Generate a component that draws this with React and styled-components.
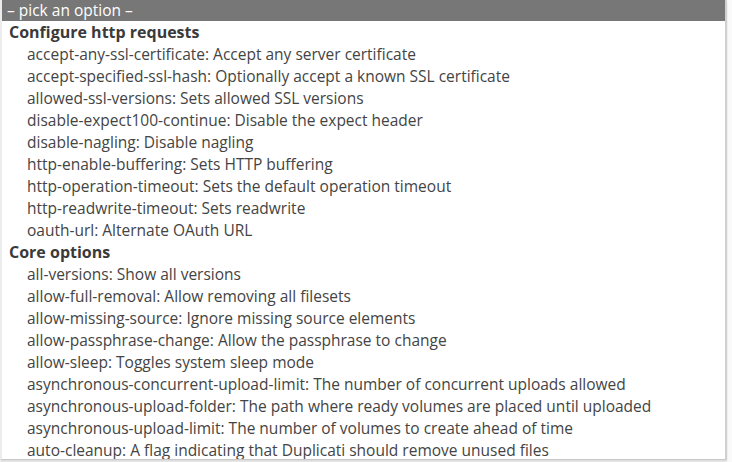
import React from "react";
import styled, { createGlobalStyle } from "styled-components";

const GlobalStyle = createGlobalStyle`
  html, body {
    margin: 0;
    padding: 0;
    background: #fafafa;
    overflow: hidden;
  }
`;

const groups = [
  {
    label: "Configure http requests",
    options: [
      "accept-any-ssl-certificate: Accept any server certificate",
      "accept-specified-ssl-hash: Optionally accept a known SSL certificate",
      "allowed-ssl-versions: Sets allowed SSL versions",
      "disable-expect100-continue: Disable the expect header",
      "disable-nagling: Disable nagling",
      "http-enable-buffering: Sets HTTP buffering",
      "http-operation-timeout: Sets the default operation timeout",
      "http-readwrite-timeout: Sets readwrite",
      "oauth-url: Alternate OAuth URL",
    ],
  },
  {
    label: "Core options",
    options: [
      "all-versions: Show all versions",
      "allow-full-removal: Allow removing all filesets",
      "allow-missing-source: Ignore missing source elements",
      "allow-passphrase-change: Allow the passphrase to change",
      "allow-sleep: Toggles system sleep mode",
      "asynchronous-concurrent-upload-limit: The number of concurrent uploads allowed",
      "asynchronous-upload-folder: The path where ready volumes are placed until uploaded",
      "asynchronous-upload-limit: The number of volumes to create ahead of time",
      "auto-cleanup: A flag indicating that Duplicati should remove unused files",
    ],
  },
];

const Page = styled.div`
  width: 732px;
  height: 462px;
  display: flex;
  font-family: "Open Sans", "Noto Sans", sans-serif;
`;

const ListBox = styled.div`
  width: 727px;
  height: 460px;
  background: #fff;
  border-right: 2px solid #d0d0d0;
  border-bottom: 1px solid #c8c8c8;
  border-left: 2px solid #ececec;
  box-shadow: 0 2px 2px rgba(0, 0, 0, 0.12);
  overflow: hidden;
  box-sizing: border-box;
`;

const Header = styled.div`
  height: 21px;
  margin-left: -2px;
  padding-left: 7px;
  background: #777;
  color: #fff;
  font-size: 15.5px;
  line-height: 20px;
`;

const GroupLabel = styled.div`
  height: 22px;
  line-height: 23px;
  padding-left: 7px;
  font-size: 16px;
  font-weight: 700;
  color: #3a3a3a;
`;

const Option = styled.div`
  height: 22px;
  line-height: 23px;
  padding-left: 25px;
  font-size: 15.5px;
  color: #444;
  white-space: nowrap;
`;

export default function App() {
  return (
    <>
      <GlobalStyle />
      <Page>
        <ListBox>
          <Header>– pick an option –</Header>
          {groups.map((g) => (
            <div key={g.label}>
              <GroupLabel>{g.label}</GroupLabel>
              {g.options.map((o) => (
                <Option key={o}>{o}</Option>
              ))}
            </div>
          ))}
        </ListBox>
      </Page>
    </>
  );
}
